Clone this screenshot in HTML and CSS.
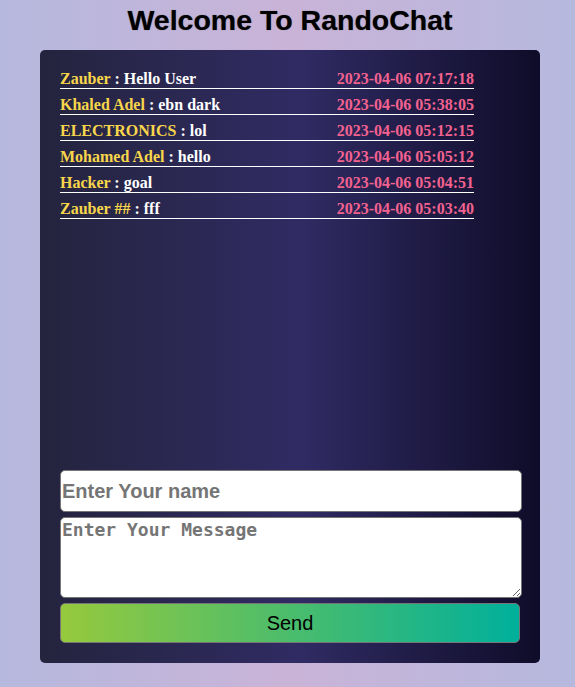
FILE: index.html
```html
<!DOCTYPE html>
<html lang="en">
<head>
<meta charset="utf-8">
<title>RandoChat</title>
<link rel="stylesheet" href="styles.css">
</head>
<body>
<h1 class="title">Welcome To RandoChat</h1>
<div class="panel">
  <div class="messages">
    <div class="msg"><span class="text"><span class="name">Zauber</span> : Hello User</span><span class="time">2023-04-06 07:17:18</span></div>
    <div class="msg"><span class="text"><span class="name">Khaled Adel</span> : ebn dark</span><span class="time">2023-04-06 05:38:05</span></div>
    <div class="msg"><span class="text"><span class="name">ELECTRONICS</span> : lol</span><span class="time">2023-04-06 05:12:15</span></div>
    <div class="msg"><span class="text"><span class="name">Mohamed Adel</span> : hello</span><span class="time">2023-04-06 05:05:12</span></div>
    <div class="msg"><span class="text"><span class="name">Hacker</span> : goal</span><span class="time">2023-04-06 05:04:51</span></div>
    <div class="msg"><span class="text"><span class="name">Zauber ##</span> : fff</span><span class="time">2023-04-06 05:03:40</span></div>
  </div>
  <form class="form">
    <input class="name-input" type="text" placeholder="Enter Your name">
    <textarea class="msg-input" placeholder="Enter Your Message"></textarea>
    <button class="send" type="button">Send</button>
  </form>
</div>
</body>
</html>
```
FILE: styles.css
```css
html {
  min-height: 100%;
  background: linear-gradient(to right, #b6b8de, #c9b3d7 50%, #b6b8de);
}
body {
  margin: 0;
  padding: 0 0 0 5px;
  min-height: 687px;
  font-family: "Liberation Sans", Arial, sans-serif;
}
.title {
  margin: 4px 0 14px;
  font-size: 28.5px;
  line-height: 32px;
  font-weight: bold;
  text-align: center;
  color: #000;
  text-shadow: 0 0 1px rgba(0, 0, 0, 0.5);
}
.panel {
  width: 500px;
  box-sizing: border-box;
  margin: 0 auto;
  padding: 20px;
  border-radius: 5px;
  background: linear-gradient(to right, #24243e, #302b63 52%, #0f0c29);
}
.messages {
  height: 400px;
  display: flex;
  flex-direction: column;
}
.msg {
  width: 90%;
  display: flex;
  justify-content: space-between;
  font-family: "Liberation Serif", "Times New Roman", serif;
  font-weight: bold;
  font-size: 16px;
  line-height: 18px;
  color: #fff;
  border-bottom: 1px solid #fff;
  margin-bottom: 7px;
}
.name {
  color: #f8d64b;
}
.time {
  color: #f2628f;
}
.form {
  display: flex;
  flex-direction: column;
  gap: 5px;
  margin: 0;
}
.name-input,
.msg-input {
  box-sizing: border-box;
  width: calc(100% + 2px);
  border: 1px solid #767676;
  border-radius: 5px;
  background: #fff;
  margin: 0;
}
.name-input {
  height: 42px;
  padding: 0 1px;
  font-family: "Liberation Sans", Arial, sans-serif;
  font-weight: bold;
  font-size: 20px;
}
.msg-input {
  height: 81px;
  padding: 1px 1px;
  font-family: "DejaVu Sans Mono", monospace;
  font-weight: bold;
  font-size: 18px;
}
.name-input::placeholder,
.msg-input::placeholder {
  color: #757575;
}
.send {
  height: 40px;
  width: 100%;
  margin: 0;
  border: 1px solid #767676;
  border-radius: 5px;
  background: linear-gradient(to right, #96c93d, #00b09b);
  font-family: "Liberation Sans", Arial, sans-serif;
  font-size: 20px;
  color: #000;
}
```
